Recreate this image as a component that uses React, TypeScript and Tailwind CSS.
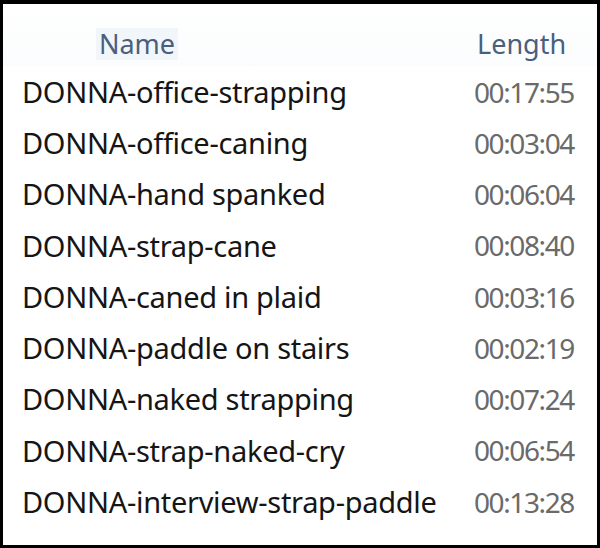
import React from "react";

const rows: [string, string][] = [
  ["DONNA-office-strapping", "00:17:55"],
  ["DONNA-office-caning", "00:03:04"],
  ["DONNA-hand spanked", "00:06:04"],
  ["DONNA-strap-cane", "00:08:40"],
  ["DONNA-caned in plaid", "00:03:16"],
  ["DONNA-paddle on stairs", "00:02:19"],
  ["DONNA-naked strapping", "00:07:24"],
  ["DONNA-strap-naked-cry", "00:06:54"],
  ["DONNA-interview-strap-paddle", "00:13:28"],
];

export default function App() {
  return (
    <div
      className="w-[600px] h-[548px] bg-black pt-[4px] pl-[3px] pr-[3px] pb-[3px]"
      style={{ fontFamily: '"Noto Sans", "Open Sans", sans-serif' }}
    >
      <div className="w-full h-full bg-white flex flex-col">
        <div className="flex h-[62px] items-center pt-[17px] bg-gradient-to-b from-white to-[#fbfcfd]">
          <div className="w-[467px] flex justify-center pr-[199px]">
            <span className="px-[3px] py-[1px] bg-[#f1f6fb] text-[27px] leading-[30px] text-[#4a5f7d]">Name</span>
          </div>
          <div className="flex-1 h-full flex items-center pl-[7px] text-[27px] leading-[30px] text-[#4a5f7d]">
            Length
          </div>
        </div>
        <div className="flex flex-col">
          {rows.map(([n, t]) => (
            <div key={n} className="flex h-[51.25px] items-center">
              <div className="w-[467px] pl-[19px] text-[29px] text-[#151515] tracking-[-0.3px]">{n}</div>
              <div className="flex-1 pl-[4px] text-[28px] text-[#6a6a6a] tracking-[-1.4px]">{t}</div>
            </div>
          ))}
        </div>
      </div>
    </div>
  );
}
